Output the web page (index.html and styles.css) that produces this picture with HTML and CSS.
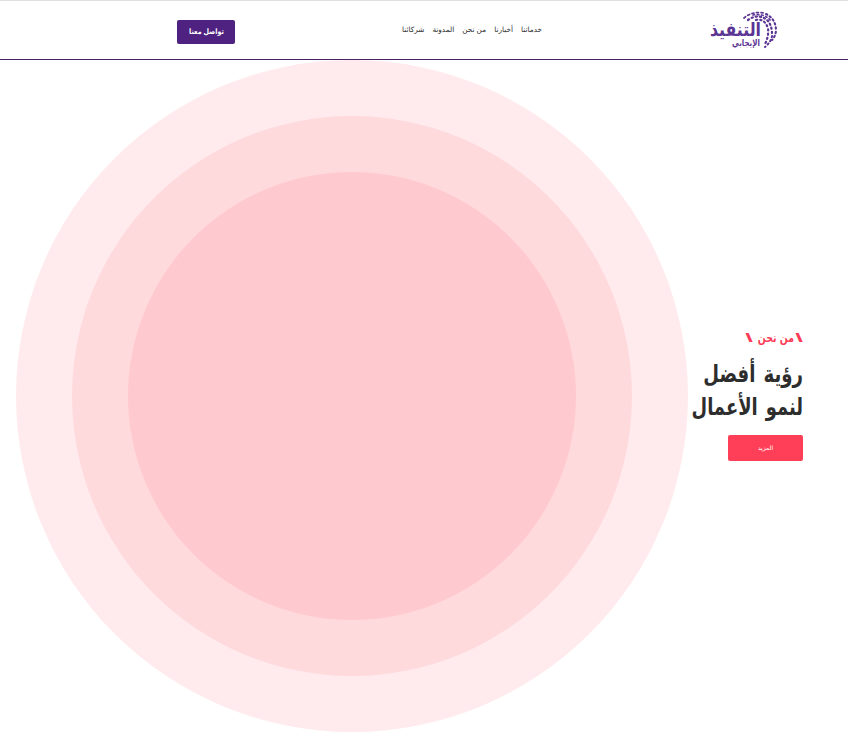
FILE: index.html
```html
<!DOCTYPE html>
<html lang="ar" dir="rtl">
<head>
<meta charset="utf-8">
<title>التنفيذ الإيجابي</title>
<link rel="stylesheet" href="styles.css">
</head>
<body>
<header class="header">
  <a class="logo" href="#">
    <svg class="logo-art" viewBox="0 0 70 40" direction="rtl">
      <g fill="none" stroke="#5b3494" stroke-linecap="round">
        <path d="M35 8Q43 1 55 3" stroke-width="1.7" stroke-dasharray="2 2.6"/>
        <path d="M39 10Q49 3 58 10Q63 15 63 24" stroke-width="2.2" stroke-dasharray="1.2 3"/>
        <path d="M44 5Q55 3 61 10" stroke-width="1.7" stroke-dasharray="1.5 2.8"/>
        <path d="M47 10Q55 8 59 18Q60 26 56 34" stroke-width="2.2" stroke-dasharray="1.2 3.1"/>
        <path d="M57 4Q67 9 67 21Q66 27 63 30" stroke-width="2.1" stroke-dasharray="1.4 2.9"/>
        <path d="M63 26Q62 32 56 37" stroke-width="2" stroke-dasharray="1.4 2.8"/>
      </g>
      <text class="logo-name" x="52" y="26" textLength="51" lengthAdjust="spacingAndGlyphs">التنفيذ</text>
      <text class="logo-sub" x="51" y="36" textLength="28" lengthAdjust="spacingAndGlyphs">الإيجابي</text>
    </svg>
  </a>
  <nav class="nav">
    <a href="#">خدماتنا</a>
    <a href="#">أخبارنا</a>
    <a href="#">من نحن</a>
    <a href="#">المدونة</a>
    <a href="#">شركائنا</a>
  </nav>
  <a class="contact" href="#"><span class="contact-label">تواصل معنا</span></a>
</header>
<main class="hero">
  <section class="intro">
    <p class="eyebrow"><span class="slash">\</span><span class="eyebrow-label">من نحن</span><span class="slash">\</span></p>
    <h1 class="title"><span class="line line-first">رؤية أفضل</span><span class="line">لنمو الأعمال</span></h1>
    <a class="more" href="#">المزيد</a>
  </section>
  <div class="ring ring-outer"><div class="ring ring-middle"><div class="ring ring-inner"></div></div></div>
</main>
</body>
</html>
```
FILE: styles.css
```css
* { box-sizing: border-box; }
body {
  margin: 0;
  height: 752px;
  overflow: hidden;
  background: #fff;
  color: #2d2d2d;
  font-family: "Liberation Sans", "DejaVu Sans", sans-serif;
}
a { color: inherit; text-decoration: none; }
.header {
  display: grid;
  grid-template-columns: 70px 140px 58px;
  column-gap: 167px;
  align-items: center;
  height: 60px;
  padding-right: 69px;
  border-top: 1px solid #e0e0e0;
  border-bottom: 1px solid #4a2162;
}
.logo { height: 40px; }
.logo-art { display: block; width: 70px; height: 40px; overflow: visible; }
.logo-name { font: bold 19px "DejaVu Sans", sans-serif; fill: #5b3494; }
.logo-sub { font: bold 9px "DejaVu Sans", sans-serif; fill: #5b3494; }
.nav { display: flex; justify-content: space-between; margin-top: -1px; font-size: 7.3px; white-space: nowrap; }
.contact {
  height: 24px;
  margin-top: 3px;
  border-radius: 2px;
  background: #4f2281;
  color: #fff;
  font-size: 7.5px;
  font-weight: bold;
  line-height: 24px;
  text-align: center;
  white-space: nowrap;
}
.contact-label { display: inline-block; transform: scaleX(.85); }
.hero { display: flex; align-items: center; height: 672px; padding-right: 45px; }
.intro { flex: none; width: 115px; margin-top: -2px; white-space: nowrap; }
.eyebrow { display: flex; width: 58px; margin: 0; color: #fd3d57; font-size: 12px; font-weight: bold; line-height: 16px; }
.eyebrow-label { flex: none; width: 41px; transform: scaleX(.78); transform-origin: right; word-spacing: 1px; }
.slash { flex: none; width: 9px; transform: scaleX(2.3); transform-origin: right; }
.title { margin: 11px 0 12px; font-size: 24px; line-height: 33px; }
.line { display: block; width: max-content; transform: scaleX(.748); transform-origin: right; word-spacing: 4px; }
.line-first { transform: scaleX(.755); }
.more {
  display: block;
  width: 75px;
  height: 26px;
  border-radius: 2px;
  background: #ff3f57;
  color: #fff;
  font-size: 6px;
  line-height: 26px;
  text-align: center;
}
.ring { display: grid; flex: none; place-items: center; border-radius: 50%; }
.ring-outer { width: 672px; height: 672px; background: #ffebed; }
.ring-middle { width: 560px; height: 560px; background: #ffdadd; }
.ring-inner { width: 448px; height: 448px; background: #ffcacf; }
```
